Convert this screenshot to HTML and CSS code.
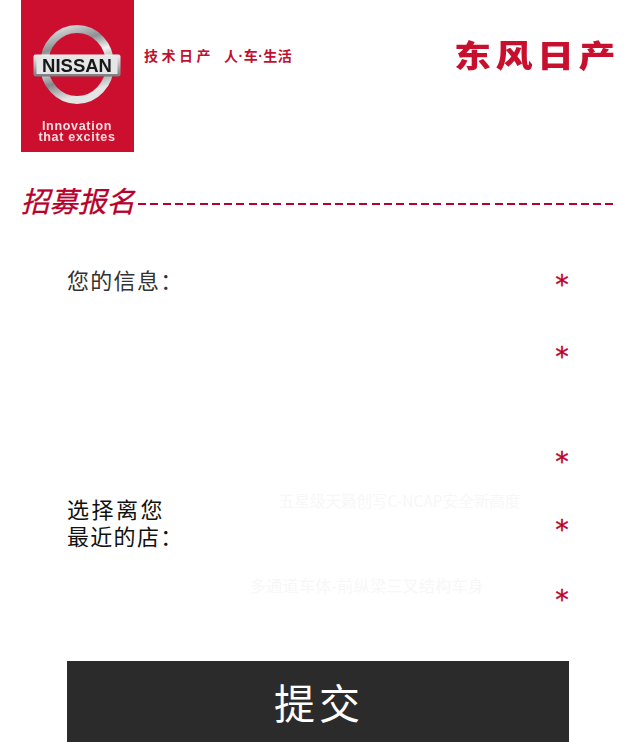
FILE: index.html
```html
<!DOCTYPE html>
<html lang="zh-CN">
<head>
<meta charset="utf-8">
<title>招募报名</title>
<link rel="stylesheet" href="styles.css">
</head>
<body>
<header class="header">
  <svg class="logo" width="113" height="152" viewBox="0 0 113 152" aria-label="Nissan">
    <defs>
      <linearGradient id="ring" x1="0" y1="0" x2="0.3" y2="1">
        <stop offset="0" stop-color="#e9e9e9"/>
        <stop offset="0.3" stop-color="#8d8f92"/>
        <stop offset="0.5" stop-color="#f4f4f4"/>
        <stop offset="0.75" stop-color="#85878a"/>
        <stop offset="1" stop-color="#e4e4e4"/>
      </linearGradient>
      <linearGradient id="bar" x1="0" y1="0" x2="0" y2="1">
        <stop offset="0" stop-color="#f2f2f2"/>
        <stop offset="0.5" stop-color="#b5b6b8"/>
        <stop offset="1" stop-color="#77797c"/>
      </linearGradient>
    </defs>
    <rect width="113" height="152" fill="#cc0f2f"/>
    <ellipse cx="56" cy="64.5" rx="33" ry="35.500" fill="none" stroke="url(#ring)" stroke-width="8"/>
    <rect x="12.500" y="54.500" width="87" height="22" rx="2" fill="url(#bar)"/>
    <rect x="15.500" y="57" width="81" height="17" fill="#e6e6e6"/>
    <text class="logo-brand" x="56" y="71.500" text-anchor="middle">NISSAN</text>
    <text class="logo-line" x="56" y="130" text-anchor="middle">Innovation</text>
    <text class="logo-line" x="56" y="141" text-anchor="middle">that excites</text>
  </svg>
  <p class="tagline">技术日产<span class="tagline-tail">人·车·生活</span></p>
  <p class="brand-cn">东风日产</p>
</header>

<h1 class="section-title"><span class="section-name">招募报名</span><span class="section-rule"></span></h1>

<form class="form">
  <div class="row row-one">
    <span class="label">您的信息：</span>
    <span class="star">*</span>
  </div>
  <div class="row row-two"><span class="star">*</span></div>
  <div class="row row-three"><span class="star">*</span></div>
  <div class="row row-four">
    <span class="label label-stack"><span class="label-wide">选择离您</span><br>最近的店：</span>
    <span class="ghost ghost-one">五星级天籁创写C-NCAP安全新高度</span>
    <span class="star">*</span>
  </div>
  <div class="row row-five">
    <span class="ghost ghost-two">多通道车体-前纵梁三叉结构车身</span>
    <span class="star">*</span>
  </div>
  <button class="submit" type="button">提交</button>
</form>
</body>
</html>
```
FILE: styles.css
```css
* {
  box-sizing: border-box;
}

html,
body {
  margin: 0;
  height: 742px;
  overflow: hidden;
  background: #fff;
  font-family: "Noto Sans CJK SC", "Liberation Sans", sans-serif;
}

.header {
  display: flex;
  align-items: flex-start;
  height: 152px;
  padding: 0 27px 0 21px;
}

.logo {
  display: block;
  flex: none;
  filter: blur(0.4px);
}

.logo-brand {
  font: 700 18.500px "Liberation Sans", sans-serif;
  fill: #17181a;
}

.logo-line {
  font: 700 12.500px "Liberation Sans", sans-serif;
  letter-spacing: 0.7px;
  fill: #f6dfe2;
}

.tagline {
  margin: 45px 0 0 10px;
  font-size: 14px;
  line-height: 20px;
  font-weight: 700;
  letter-spacing: 3.500px;
  color: #c01030;
  white-space: nowrap;
}

.tagline-tail {
  margin-left: 10px;
  font-family: "Liberation Sans", "Noto Sans CJK SC", sans-serif;
  letter-spacing: 0.500px;
}

.brand-cn {
  margin: 29px -7px 0 auto;
  font-size: 37px;
  line-height: 50px;
  font-weight: 900;
  letter-spacing: 4.500px;
  color: #c8102e;
  transform: scaleY(0.82);
}

.section-title {
  display: flex;
  align-items: center;
  height: 40px;
  margin: 28px 27px 0 21px;
  font-weight: 400;
}

.section-name {
  font-size: 28.500px;
  line-height: 40px;
  font-style: italic;
  color: #b8002c;
  -webkit-text-stroke: 0.3px #b8002c;
}

.section-rule {
  flex: 1;
  height: 2px;
  margin: 7px 0 0 3px;
  background: repeating-linear-gradient(90deg, #b8002c 0 8px, transparent 8px 12.300px);
}

.form {
  display: flex;
  flex-direction: column;
  width: 502px;
  margin: 0 0 0 67px;
}

.row {
  position: relative;
  display: flex;
  align-items: flex-start;
  justify-content: space-between;
}

.row-one {
  height: 72px;
  margin-top: 46px;
}

.row-two {
  justify-content: flex-end;
  height: 105px;
}

.row-three {
  justify-content: flex-end;
  height: 68px;
}

.row-four {
  height: 70px;
}

.row-five {
  justify-content: flex-end;
  height: 80px;
}

.label {
  font-size: 22px;
  line-height: 27px;
  letter-spacing: 1.300px;
  color: #333;
}

.label-stack {
  margin-top: -16px;
  color: #111;
}

.label-wide {
  letter-spacing: 2.500px;
}

.star {
  width: 14px;
  margin: 4px 0 0;
  font: 400 27px/30px "DejaVu Sans", sans-serif;
  text-align: center;
  color: #b8002c;
  -webkit-text-stroke: 0.3px #b8002c;
}

.ghost {
  position: absolute;
  font-size: 15.500px;
  line-height: 20px;
  color: #f7f7f7;
  white-space: nowrap;
}

.ghost-one {
  left: 212px;
  top: -21px;
}

.ghost-two {
  left: 183px;
  top: -6px;
  font-size: 16px;
  letter-spacing: 0.300px;
}

.submit {
  display: block;
  width: 502px;
  height: 81px;
  padding: 0 0 0 2px;
  border: 0;
  font-family: inherit;
  font-size: 41px;
  line-height: 81px;
  letter-spacing: 4px;
  color: #fff;
  background: #2b2b2b;
}
```
